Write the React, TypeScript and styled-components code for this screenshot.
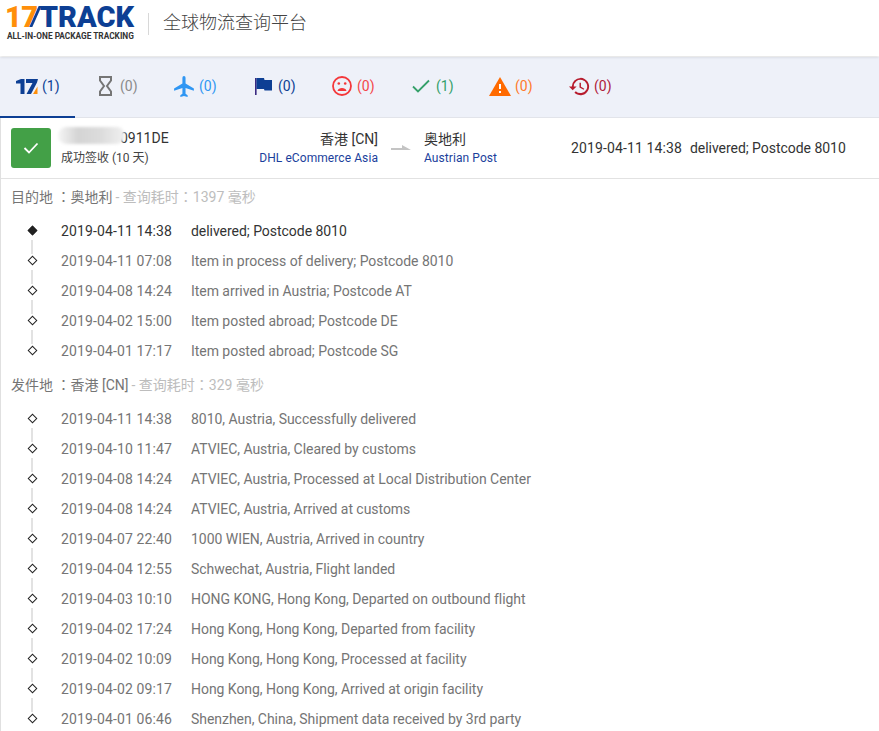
import React from 'react';
import styled, { createGlobalStyle } from 'styled-components';

// Typescript types
interface TabItem {
  icon: React.ReactNode;
  count: number;
  color: string;
}

interface EventItem {
  time: string;
  text: string;
}

const GlobalStyle = createGlobalStyle`
html, body {
  margin: 0;
  padding: 0;
  background: #fff;
  overflow: hidden;
}
body {
  font-family: Roboto, "Noto Sans CJK SC", sans-serif;
  font-size: 14px;
  color: #333;
}
`;

const Page = styled.div`
width: 879px;
height: 731px;
overflow: hidden;
`;

const Header = styled.header`
height: 56px;
box-sizing: border-box;
display: flex;
align-items: center;
padding: 0 0 9px 5px;
background: #fff;
box-shadow: 0 1px 3px rgba(0, 0, 0, 0.14);
position: relative;
`;

const Logo = styled.div`
width: 129px;
display: flex;
flex-direction: column;
gap: 3px;
`;

const LogoMark = styled.div`
height: 22px;
display: flex;
align-items: center;
font-family: Roboto, sans-serif;
font-weight: 900;
font-size: 29px;
line-height: 22px;
color: #0d3f94;
`;

const LogoNumber = styled.span`
color: #ff8f0a;
letter-spacing: -0.5px;
`;

const LogoSlash = styled.span`
display: inline-block;
width: 5px;
height: 21px;
margin: 0 3px 0 -4px;
background: #0d3f94;
transform: skewX(-24deg);
`;

const LogoTagline = styled.div`
font-family: Roboto, sans-serif;
font-weight: 700;
font-size: 8.3px;
line-height: 11px;
margin-left: 2px;
white-space: nowrap;
color: #333;
`;

const HeaderDivider = styled.div`
width: 1px;
height: 22px;
margin: 0 14px;
background: #d8d8d8;
`;

const HeaderTitle = styled.h1`
margin: 0 0 6px;
font-family: "Noto Sans CJK SC", sans-serif;
font-weight: 300;
font-size: 18px;
color: #444;
`;

const TabBar = styled.nav`
height: 61px;
display: flex;
background: #eef1f9;
border-bottom: 1px solid #e2e4ea;
box-sizing: border-box;
margin-top: 1px;
`;

const Tab = styled.div<{ $active?: boolean; $color: string }>`
width: ${(p) => (p.$active ? '78px' : '79px')};
flex: none;
height: 60px;
box-sizing: border-box;
display: flex;
align-items: center;
gap: 4px;
padding: 0 0 2px 16px;
color: ${(p) => p.$color};
position: relative;
&::after {
  content: '';
  display: ${(p) => (p.$active ? 'block' : 'none')};
  position: absolute;
  left: 0;
  bottom: -1px;
  width: 75px;
  height: 2px;
  background: #0d3f94;
}
`;

const TabIcon = styled.span`
width: 22px;
height: 22px;
display: flex;
align-items: center;
justify-content: center;
flex: none;
& svg {
  flex: none;
}
`;

const TabCount = styled.span`
font-size: 14px;
`;

const Content = styled.main`
border-left: 1px solid #e0e0e0;
`;

const Summary = styled.section`
height: 61px;
display: flex;
align-items: center;
border-bottom: 1px solid #e2e2e2;
box-sizing: border-box;
padding-left: 10px;
`;

const StatusBadge = styled.div`
width: 40px;
height: 40px;
border-radius: 3px;
background: #43a047;
display: flex;
align-items: center;
justify-content: center;
flex: none;
`;

const SummaryIdentity = styled.div`
width: 190px;
margin-left: 10px;
display: flex;
flex-direction: column;
gap: 1px;
`;

const TrackingNumber = styled.div`
position: relative;
height: 19px;
line-height: 19px;
padding-left: 59px;
font-size: 14px;
color: #333;
`;

const BlurPatch = styled.div`
position: absolute;
left: -3px;
top: -2px;
width: 67px;
height: 17px;
border-radius: 9px;
background: linear-gradient(90deg, #f5f5f5, #d4d4d4 30%, #dcdcdc 65%, #f1f1f1);
filter: blur(1.5px);
`;

const StatusText = styled.div`
font-size: 12px;
line-height: 18px;
color: #444;
`;

const Endpoint = styled.div<{ $align: 'left' | 'right' }>`
width: ${(p) => (p.$align === 'right' ? '127px' : '147px')};
display: flex;
flex-direction: column;
gap: 1px;
text-align: ${(p) => p.$align};
`;

const EndpointName = styled.div`
font-size: 14px;
line-height: 20px;
color: #333;
`;

const Carrier = styled.div`
font-size: 12px;
line-height: 17px;
letter-spacing: 0.08px;
color: #1b3f9c;
white-space: nowrap;
`;

const RouteArrow = styled.div`
width: 46px;
display: flex;
justify-content: center;
flex: none;
`;

const LatestEvent = styled.div`
display: flex;
gap: 8px;
font-size: 14px;
white-space: nowrap;
color: #333;
`;

const SectionHead = styled.div<{ $spaced?: boolean }>`
height: 34px;
display: flex;
align-items: center;
padding-left: 10px;
font-family: Roboto, "Noto Sans CJK TC", sans-serif;
font-size: 14px;
color: #757575;
white-space: nowrap;
margin-top: ${(p) => (p.$spaced ? '1px' : '0')};
`;

const SectionMeta = styled.span`
color: #bdbdbd;
margin-left: 3px;
`;

const Timeline = styled.ol<{ $top: number }>`
list-style: none;
margin: 0;
padding: ${(p) => p.$top}px 0 0;
`;

const Row = styled.li<{ $current?: boolean; $last?: boolean }>`
height: 30px;
display: flex;
align-items: center;
position: relative;
color: ${(p) => (p.$current ? '#333' : '#757575')};
white-space: nowrap;
&::after {
  content: '';
  display: ${(p) => (p.$last ? 'none' : 'block')};
  position: absolute;
  left: 30px;
  top: 24px;
  width: 2px;
  height: 14px;
  background: #e2e2e2;
}
`;

const Diamond = styled.span<{ $filled?: boolean }>`
width: 7px;
height: 7px;
margin-left: 27.5px;
margin-right: 25.5px;
box-sizing: border-box;
flex: none;
transform: rotate(45deg);
position: relative;
top: -1px;
background: ${(p) => (p.$filled ? '#222' : '#fff')};
border: 1.2px solid #222;
`;

const DateText = styled.span`
letter-spacing: 0.12px;
`;

const RowTime = styled(DateText)`
width: 130px;
flex: none;
`;

const EventText = styled.span`
letter-spacing: -0.04px;
`;

const tabs: TabItem[] = [
  {
    color: '#0d3f94',
    count: 1,
    icon: (
      <svg width="22" height="15" viewBox="0 0 22 15">
        <path d="M0 2L5 0H8.500V15H4.500V4.500H0z" fill="#0d3f94" />
        <path d="M10 0H22L21 3.500L15 15H10.500L16.500 4H10z" fill="#0d3f94" />
        <path d="M17 15L21.500 7.500V15z" fill="#ff8f0a" />
      </svg>
    ),
  },
  {
    color: '#8a8a8a',
    count: 0,
    icon: (
      <svg width="13" height="20" viewBox="0 0 13 20" fill="none" stroke="#757575" strokeWidth="2">
        <path d="M1 1h11v3.500L8 10l4 5.500V19H1v-3.500L5 10 1 4.500z" />
      </svg>
    ),
  },
  {
    color: '#2f96f3',
    count: 0,
    icon: (
      <svg width="25" height="25" viewBox="0 0 24 24" fill="#2f96f3">
        <path d="M21 16v-2l-8-5V3.500a1.500 1.500 0 0 0-3 0V9l-8 5v2l8-2.500V19l-2 1.500V22l3.500-1 3.500 1v-1.500L13 19v-5.500z" />
      </svg>
    ),
  },
  {
    color: '#0d3f94',
    count: 0,
    icon: (
      <svg width="17" height="17" viewBox="0 0 17 17">
        <rect x="0" y="0" width="1.600" height="17" fill="#3b2a82" />
        <path d="M1.500 0H9l.5 2H17v10.500H9.500L9 11H1.500z" fill="#0d3f94" />
      </svg>
    ),
  },
  {
    color: '#f4474a',
    count: 0,
    icon: (
      <svg width="20" height="20" viewBox="0 0 20 20" fill="none">
        <circle cx="10" cy="10" r="9" stroke="#f4373a" strokeWidth="1.800" />
        <circle cx="6.800" cy="7.500" r="1.300" fill="#f4373a" />
        <circle cx="13.200" cy="7.500" r="1.300" fill="#f4373a" />
        <path d="M5.500 15c.6-2.200 2.300-3 4.500-3s3.900.8 4.500 3z" fill="#f4373a" />
      </svg>
    ),
  },
  {
    color: '#35a06a',
    count: 1,
    icon: (
      <svg width="18" height="14" viewBox="0 0 18 14" fill="none">
        <path d="M1 7.500L6 12.500L17 1.500" stroke="#35a06a" strokeWidth="1.800" />
      </svg>
    ),
  },
  {
    color: '#ff7a2a',
    count: 0,
    icon: (
      <svg width="22" height="19" viewBox="0 0 22 19">
        <path d="M11 0L22 19H0z" fill="#ff6a00" />
        <rect x="10" y="7" width="2" height="5" fill="#fff" />
        <rect x="10" y="14" width="2" height="2" fill="#fff" />
      </svg>
    ),
  },
  {
    color: '#b0203a',
    count: 0,
    icon: (
      <svg width="23" height="23" viewBox="0 0 24 24" fill="#b71c2e">
        <path d="M13 3a9 9 0 0 0-9 9H1l3.900 3.900L9 12H6a7 7 0 1 1 2.100 4.900l-1.400 1.500A9 9 0 1 0 13 3zm-1 5v5l4.300 2.500.7-1.200-3.500-2.100V8z" />
      </svg>
    ),
  },
];

const destinationEvents: EventItem[] = [
  { time: '2019-04-11 14:38', text: 'delivered; Postcode 8010' },
  { time: '2019-04-11 07:08', text: 'Item in process of delivery; Postcode 8010' },
  { time: '2019-04-08 14:24', text: 'Item arrived in Austria; Postcode AT' },
  { time: '2019-04-02 15:00', text: 'Item posted abroad; Postcode DE' },
  { time: '2019-04-01 17:17', text: 'Item posted abroad; Postcode SG' },
];

const originEvents: EventItem[] = [
  { time: '2019-04-11 14:38', text: '8010, Austria, Successfully delivered' },
  { time: '2019-04-10 11:47', text: 'ATVIEC, Austria, Cleared by customs' },
  { time: '2019-04-08 14:24', text: 'ATVIEC, Austria, Processed at Local Distribution Center' },
  { time: '2019-04-08 14:24', text: 'ATVIEC, Austria, Arrived at customs' },
  { time: '2019-04-07 22:40', text: '1000 WIEN, Austria, Arrived in country' },
  { time: '2019-04-04 12:55', text: 'Schwechat, Austria, Flight landed' },
  { time: '2019-04-03 10:10', text: 'HONG KONG, Hong Kong, Departed on outbound flight' },
  { time: '2019-04-02 17:24', text: 'Hong Kong, Hong Kong, Departed from facility' },
  { time: '2019-04-02 10:09', text: 'Hong Kong, Hong Kong, Processed at facility' },
  { time: '2019-04-02 09:17', text: 'Hong Kong, Hong Kong, Arrived at origin facility' },
  { time: '2019-04-01 06:46', text: 'Shenzhen, China, Shipment data received by 3rd party' },
];

export default function App() {
  return (
    <Page>
      <GlobalStyle />
      <Header>
        <Logo>
          <LogoMark>
            <LogoNumber>17</LogoNumber>
            <LogoSlash />
            TRACK
          </LogoMark>
          <LogoTagline>ALL-IN-ONE PACKAGE TRACKING</LogoTagline>
        </Logo>
        <HeaderDivider />
        <HeaderTitle>全球物流查询平台</HeaderTitle>
      </Header>
      <TabBar>
        {tabs.map((tab, index) => (
          <Tab key={index} $active={index === 0} $color={tab.color}>
            <TabIcon>{tab.icon}</TabIcon>
            <TabCount>({tab.count})</TabCount>
          </Tab>
        ))}
      </TabBar>
      <Content>
        <Summary>
          <StatusBadge>
            <svg width="16" height="12" viewBox="0 0 16 12" fill="none">
              <path d="M1.500 6L6 10.500L14.500 1.500" stroke="#fff" strokeWidth="1.800" />
            </svg>
          </StatusBadge>
          <SummaryIdentity>
            <TrackingNumber>
              0911DE
              <BlurPatch />
            </TrackingNumber>
            <StatusText>成功签收 (10 天)</StatusText>
          </SummaryIdentity>
          <Endpoint $align="right">
            <EndpointName>香港 [CN]</EndpointName>
            <Carrier>DHL eCommerce Asia</Carrier>
          </Endpoint>
          <RouteArrow>
            <svg width="20" height="8" viewBox="0 0 20 8">
              <path d="M0 4H11V1L20 6H0z" fill="#c4c4c4" />
            </svg>
          </RouteArrow>
          <Endpoint $align="left">
            <EndpointName>奥地利</EndpointName>
            <Carrier>Austrian Post</Carrier>
          </Endpoint>
          <LatestEvent>
            <DateText>2019-04-11 14:38</DateText>
            <EventText>delivered; Postcode 8010</EventText>
          </LatestEvent>
        </Summary>
        <SectionHead>
          目的地 ：奥地利<SectionMeta>- 查询耗时：1397 毫秒</SectionMeta>
        </SectionHead>
        <Timeline $top={3}>
          {destinationEvents.map((item, index) => (
            <Row key={index} $current={index === 0} $last={index === destinationEvents.length - 1}>
              <Diamond $filled={index === 0} />
              <RowTime>{item.time}</RowTime>
              <EventText>{item.text}</EventText>
            </Row>
          ))}
        </Timeline>
        <SectionHead $spaced>
          发件地 ：香港 [CN]<SectionMeta>- 查询耗时：329 毫秒</SectionMeta>
        </SectionHead>
        <Timeline $top={3}>
          {originEvents.map((item, index) => (
            <Row key={index} $last={index === originEvents.length - 1}>
              <Diamond />
              <RowTime>{item.time}</RowTime>
              <EventText>{item.text}</EventText>
            </Row>
          ))}
        </Timeline>
      </Content>
    </Page>
  );
}
